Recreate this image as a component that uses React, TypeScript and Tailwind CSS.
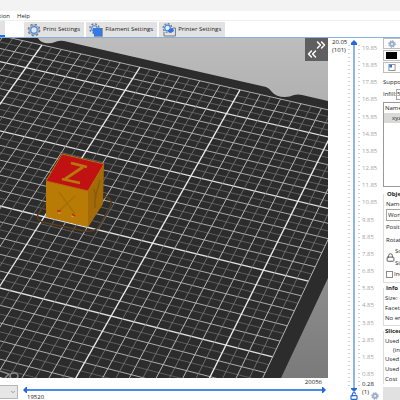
import type { ReactNode } from "react";
import { ChevronDown, ChevronsLeft, ChevronsRight, Lock, LockOpen } from "lucide-react";

type Point = [number, number];

// Corners of the reference patch of the print bed, u along the bed, v towards the viewer
const U_MIN = 0;
const U_MAX = 15;
const V_MIN = -2;
const V_MAX = 15;
const CORNERS: Point[] = [
  [42, 45],
  [342, 113],
  [226, 345],
  [-111, 260],
];

// Square to quad projection
function project(u: number, v: number): Point {
  const [[x0, y0], [x1, y1], [x2, y2], [x3, y3]] = CORNERS;
  const s = (u - U_MIN) / (U_MAX - U_MIN);
  const t = (v - V_MIN) / (V_MAX - V_MIN);
  const dx1 = x1 - x2;
  const dx2 = x3 - x2;
  const dx3 = x0 - x1 + x2 - x3;
  const dy1 = y1 - y2;
  const dy2 = y3 - y2;
  const dy3 = y0 - y1 + y2 - y3;
  const det = dx1 * dy2 - dx2 * dy1;
  const g = (dx3 * dy2 - dx2 * dy3) / det;
  const h = (dx1 * dy3 - dx3 * dy1) / det;
  const w = g * s + h * t + 1;
  return [
    ((x1 - x0 + g * x1) * s + (x3 - x0 + h * x3) * t + x0) / w,
    ((y1 - y0 + g * y1) * s + (y3 - y0 + h * y3) * t + y0) / w,
  ];
}

function BedLine({ from, to, index }: { from: Point; to: Point; index: number }) {
  const bold = index % 10 === 0;
  const major = index % 2 === 0;
  return (
    <line
      x1={from[0]}
      y1={from[1]}
      x2={to[0]}
      y2={to[1]}
      stroke={bold ? "#ececec" : major ? "#b4b4b4" : "#7c7c7c"}
      strokeWidth={bold ? 1.3 : major ? 1 : 0.8}
    />
  );
}

function BedGrid() {
  const us = Array.from({ length: 55 }, (_, i) => i - 20);
  const vs = Array.from({ length: 49 }, (_, i) => i - 4);
  return (
    <g>
      {vs.map((i) => (
        <g key={`v${i}`} opacity={i % 2 === 0 ? 0.95 : 0.8}>
          <BedLine from={project(-10, i / 2)} to={project(17, i / 2)} index={i} />
        </g>
      ))}
      {us.map((i) => (
        <BedLine key={`u${i}`} from={project(i / 2, -2)} to={project(i / 2, 22)} index={i} />
      ))}
    </g>
  );
}

function Cube() {
  return (
    <g>
      <path
        d="M46 203 L38 214 Q36 220 42 222 L84 231 Q94 232 98 228 L111 205 Q113 199 104 196"
        fill="none"
        stroke="#5c3d1c"
        strokeWidth="1.4"
      />
      <polygon points="46,181 88,191 88,227 46,217" fill="#b87b05" />
      <polygon points="88,191 104,164 103,204 88,227" fill="#a26b08" />
      <polygon points="62,154 104,164 88,191 46,181" fill="#c01212" stroke="#b8720a" strokeWidth="1" />
      <g stroke="#b9780e" strokeWidth="2.8">
        <line x1="71" y1="163" x2="87" y2="167" />
        <line x1="83" y1="167" x2="65" y2="179" />
        <line x1="62" y1="179" x2="80" y2="183" />
      </g>
      <g stroke="#a57008" strokeWidth="1.4">
        <line x1="59" y1="192" x2="75" y2="214" />
        <line x1="75" y1="196" x2="58" y2="212" />
        <line x1="94" y1="189" x2="96" y2="198" stroke="#8a5b08" />
        <line x1="100" y1="180" x2="95" y2="198" stroke="#8a5b08" />
        <line x1="95" y1="198" x2="95" y2="208" stroke="#8a5b08" />
      </g>
      <g strokeWidth="1.5">
        <line x1="57" y1="211" x2="61" y2="211" stroke="#d02010" />
        <line x1="72" y1="214" x2="75" y2="216" stroke="#d02010" />
        <line x1="58" y1="213" x2="61" y2="213" stroke="#d9a860" strokeWidth="0.8" />
        <line x1="71" y1="216" x2="74" y2="217" stroke="#d9a860" strokeWidth="0.8" />
      </g>
    </g>
  );
}

function Viewport() {
  return (
    <div className="relative min-h-0 flex-1 overflow-hidden bg-[#2d2d2d]">
      <svg className="block h-full w-full" viewBox="0 38 328 340" preserveAspectRatio="xMinYMin slice">
        <defs>
          <linearGradient id="sky" x1="0" y1="0" x2="0" y2="1">
            <stop offset="0" stopColor="#bdbdbd" />
            <stop offset="1" stopColor="#7a7a7a" />
          </linearGradient>
        </defs>
        <rect x="0" y="38" width="328" height="340" fill="url(#sky)" />
        <path
          d="M0 38 H38 Q40 42 45 43 Q51 44 55 42 Q60 40 64 41 L165 64 L266 87 Q269 88 272 92 Q276 97 285 97 Q290 97 294 95 Q298 94 302 95 L328 101 V278 L281 378 H0 Z"
          fill="#2c2c2c"
        />
        <BedGrid />
        <g fill="none" stroke="#8c8c8c" strokeWidth="1.5">
          <path d="M0 371 L9 374 L4 379" />
          <ellipse cx="14" cy="376" rx="4" ry="3" />
        </g>
        <Cube />
      </svg>
      <button
        aria-label="Collapse sidebar"
        className="absolute top-0 right-0 h-[23px] w-[23px] bg-[#5f5f5f] text-white"
      >
        <ChevronsRight className="absolute top-0 right-0 h-[14px] w-[14px]" strokeWidth={2.5} />
        <ChevronsLeft className="absolute bottom-0 left-0 h-[14px] w-[14px]" strokeWidth={2.5} />
      </button>
    </div>
  );
}

function GearIcon({ className = "h-[14px] w-[14px]" }: { className?: string }) {
  return (
    <svg viewBox="0 0 14 14" className={className} fill="none">
      <circle cx="7" cy="7" r="5.7" stroke="#777" strokeWidth="1.4" strokeDasharray="2.2 2.28" />
      <circle cx="7" cy="7" r="4.9" stroke="#777" strokeWidth="0.8" fill="#e8eef8" />
      <circle cx="7" cy="7" r="3.3" stroke="#3f83e6" strokeWidth="1.2" fill="#dce6f5" />
    </svg>
  );
}

function FilamentIcon() {
  return (
    <svg viewBox="0 0 14 14" className="h-[14px] w-[14px]" fill="none">
      <circle cx="5.5" cy="5.5" r="4.6" stroke="#777" strokeWidth="1.4" strokeDasharray="2 1.6" />
      <circle cx="5.5" cy="5.5" r="2.8" stroke="#3f83e6" strokeWidth="1.1" />
      <path d="M4 5 H13 V13 H5 V11 H4 Z" fill="#3479e4" />
      <path d="M5 13.4 H13.4 V5" stroke="#777" strokeWidth="0.8" />
    </svg>
  );
}

function PrinterIcon() {
  return (
    <svg viewBox="0 0 14 14" className="h-[14px] w-[14px]" fill="none">
      <path d="M2 9 V13 H13.4 V5 H11" stroke="#777" strokeWidth="1" />
      <circle cx="5.5" cy="5" r="4.4" stroke="#777" strokeWidth="1.3" strokeDasharray="1.9 1.5" />
      <circle cx="5.5" cy="5" r="2.8" stroke="#3f83e6" strokeWidth="1.2" fill="#e8eef8" />
      <path d="M7 6 L11 5 L12 8 L9 10 L6 9 Z" fill="#2f74e0" />
    </svg>
  );
}

function Tab({ icon, children }: { icon: ReactNode; children: ReactNode }) {
  return (
    <button className="flex h-[15px] items-center gap-[2px] bg-[#e2e2e2] pr-1 pl-[3px] whitespace-nowrap">
      {icon}
      <span>{children}</span>
    </button>
  );
}

const LAYERS = Array.from({ length: 20 }, (_, i) => (19.85 - i).toFixed(2));

function LayerSlider() {
  return (
    <div className="flex w-[55px] shrink-0 text-[6px] leading-[8px]">
      <div className="w-[18px] shrink-0 pl-1">
        <div>20.05</div>
        <div>(101)</div>
      </div>
      <div className="relative flex w-4 shrink-0 flex-col items-center pt-[2px]">
        <svg viewBox="0 0 8 5" className="h-[5px] w-2 shrink-0 fill-[#2469d8]">
          <path d="M4 0 L7 3 V5 H1 V3 Z" />
        </svg>
        <div className="flex w-full flex-1 justify-center gap-[3px]">
          <Ticks />
          <div className="w-[2px] bg-[#8fb6e8]" />
          <Ticks />
        </div>
        <svg viewBox="0 0 8 4" className="h-1 w-2 shrink-0 fill-[#2469d8]">
          <path d="M1 0 H7 V1 L4 4 L1 1 Z" />
        </svg>
        <LockOpen className="h-2 w-2 shrink-0 text-[#2469d8]" strokeWidth={3.5} />
        <input
          type="range"
          aria-label="Visible layers"
          className="absolute inset-0 h-full w-full opacity-0 [writing-mode:vertical-lr]"
        />
      </div>
      <div className="flex flex-1 flex-col pt-[6px]">
        <div className="flex flex-1 flex-col justify-between text-[#a3a3a3]">
          {LAYERS.map((layer) => (
            <span key={layer}>{layer}</span>
          ))}
        </div>
        <div className="pt-[2px]">0.28</div>
        <div className="flex h-3 items-start justify-between pr-1">
          <span>(1)</span>
          <GearIcon className="h-2 w-2 self-end" />
        </div>
      </div>
    </div>
  );
}

function Ticks() {
  return (
    <div className="w-[2px] bg-[repeating-linear-gradient(to_bottom,#d2d2d2_0_1px,transparent_1px_4px)]" />
  );
}

function MoveSlider() {
  return (
    <div className="flex h-[22px] shrink-0 items-stretch gap-[5px] bg-white pr-[2px] text-[6px] leading-[8px]">
      <div className="relative mt-[7px] h-[14px] w-[18px] shrink-0">
        <select
          aria-label="View type"
          className="h-full w-full appearance-none border border-l-0 border-[#b5b5b5] bg-[#e6e6e6]"
        />
        <ChevronDown className="pointer-events-none absolute top-1 right-[2px] h-[6px] w-[6px] text-[#555]" />
      </div>
      <div className="relative flex flex-1 flex-col">
        <div className="shrink-0 pr-1 text-right">20056</div>
        <div className="flex h-2 shrink-0 items-center">
          <svg viewBox="0 0 4 8" className="h-2 w-1 fill-[#2469d8]">
            <path d="M4 1 V7 H3 L0 4 L3 1 Z" />
          </svg>
          <div className="h-[2px] flex-1 bg-[#4b8ae6]" />
          <svg viewBox="0 0 4 8" className="h-2 w-1 fill-[#2469d8]">
            <path d="M0 1 V7 H1 L4 4 L1 1 Z" />
          </svg>
        </div>
        <div className="shrink-0 pl-1 leading-[7px]">19520</div>
        <input type="range" aria-label="Visible moves" className="absolute inset-0 h-full w-full opacity-0" />
      </div>
    </div>
  );
}

function Sidebar() {
  return (
    <aside className="w-[17px] shrink-0 overflow-hidden text-[6px] leading-[10px] whitespace-nowrap">
      <div className="w-24">
        <button aria-label="Print profile" className="flex h-[11px] w-full items-center border border-[#bdbdbd] pl-1">
          <GearIcon className="h-2 w-2" />
        </button>
        <button aria-label="Filament" className="mt-px flex h-[11px] w-full items-center border border-[#bdbdbd] pl-[2px]">
          <span className="h-[7px] w-[11px] bg-black" />
        </button>
        <button aria-label="Printer" className="mt-px flex h-[11px] w-full items-center border border-[#bdbdbd] pl-1">
          <svg viewBox="0 0 8 8" className="h-[7px] w-2" fill="none">
            <rect x="0.5" y="0.5" width="7" height="7" stroke="#888" />
            <rect x="1" y="1" width="3" height="3" fill="#2f74e0" />
          </svg>
        </button>
        <div className="mt-1">Supports:</div>
        <label className="mt-px flex h-3 items-center">
          <span className="w-[13px]">Infill:</span>
          <input defaultValue="5%" className="h-[11px] w-8 border border-[#a5a5a5]" />
        </label>
        <table className="mt-[2px] block h-[85px] w-full border border-[#9a9a9a] text-left">
          <thead>
            <tr>
              <th className="pl-px font-normal">Name</th>
            </tr>
          </thead>
          <tbody>
            <tr>
              <td className="w-24 bg-[#d9d9d9] pl-2">xyz</td>
            </tr>
          </tbody>
        </table>
        <fieldset className="mt-[2px] border-b border-l border-[#dcdcdc] pb-[3px] pl-[2px]">
          <legend className="pl-px font-bold">Object manipulation</legend>
          <label className="block" htmlFor="coords">
            Name:
          </label>
          <select id="coords" className="block h-3 w-20 appearance-none border border-[#a5a5a5] px-px">
            <option>World coordinates</option>
          </select>
          <div className="pt-px">Position:</div>
          <div className="pt-[3px]">Rotate:</div>
          <div className="flex items-center">
            <Lock className="h-[9px] w-[9px] text-[#555]" strokeWidth={2.5} />
            <div className="leading-[12px]">
              <div>Scale factors:</div>
              <div>Size:</div>
            </div>
          </div>
          <label className="flex items-center gap-px">
            <input type="checkbox" className="h-[7px] w-[7px] shrink-0 appearance-none border border-[#8a8a8a]" />
            Inches
          </label>
        </fieldset>
        <fieldset className="border-b border-l border-[#dcdcdc] pb-[2px] pl-px">
          <legend className="pl-px font-bold">Info</legend>
          <div>Size:</div>
          <div>Facets:</div>
          <div>No errors detected</div>
        </fieldset>
        <fieldset className="border-l border-[#dcdcdc] pl-px">
          <legend className="font-bold">Sliced Info</legend>
          <div>Used Filament (g)</div>
          <div className="pl-2 leading-[8px]">(including spool)</div>
          <div>Used Filament (m)</div>
          <div>Used Filament (mm³)</div>
          <div>Cost</div>
        </fieldset>
        <button aria-label="Export G-code" className="mt-[3px] block h-4 w-full bg-[#e1e1e1]" />
      </div>
    </aside>
  );
}

export default function App() {
  return (
    <div className="flex h-screen flex-col overflow-hidden bg-white font-['Open_Sans',sans-serif] text-[6px] text-[#222]">
      <header className="h-[11px] shrink-0 bg-[#f3f3f3]" />
      <nav className="flex h-[10px] shrink-0 items-center gap-[7px] border-b border-[#efefef] leading-[10px]">
        <a href="#configuration" className="flex w-[10px] justify-end overflow-hidden">
          Configuration
        </a>
        <a href="#help">Help</a>
      </nav>
      <div className="flex h-4 shrink-0 items-end gap-[2px]">
        <button aria-label="Plater" className="mr-[17px] h-4 w-[5px] border-b-2 border-[#1f74e8] bg-[#e2e2e2]" />
        <Tab icon={<GearIcon />}>Print Settings</Tab>
        <Tab icon={<FilamentIcon />}>Filament Settings</Tab>
        <Tab icon={<PrinterIcon />}>Printer Settings</Tab>
      </div>
      <main className="flex min-h-0 flex-1 border-t border-[#84b0e6]">
        <section className="flex min-w-0 flex-1 flex-col">
          <Viewport />
          <MoveSlider />
        </section>
        <LayerSlider />
        <Sidebar />
      </main>
    </div>
  );
}
